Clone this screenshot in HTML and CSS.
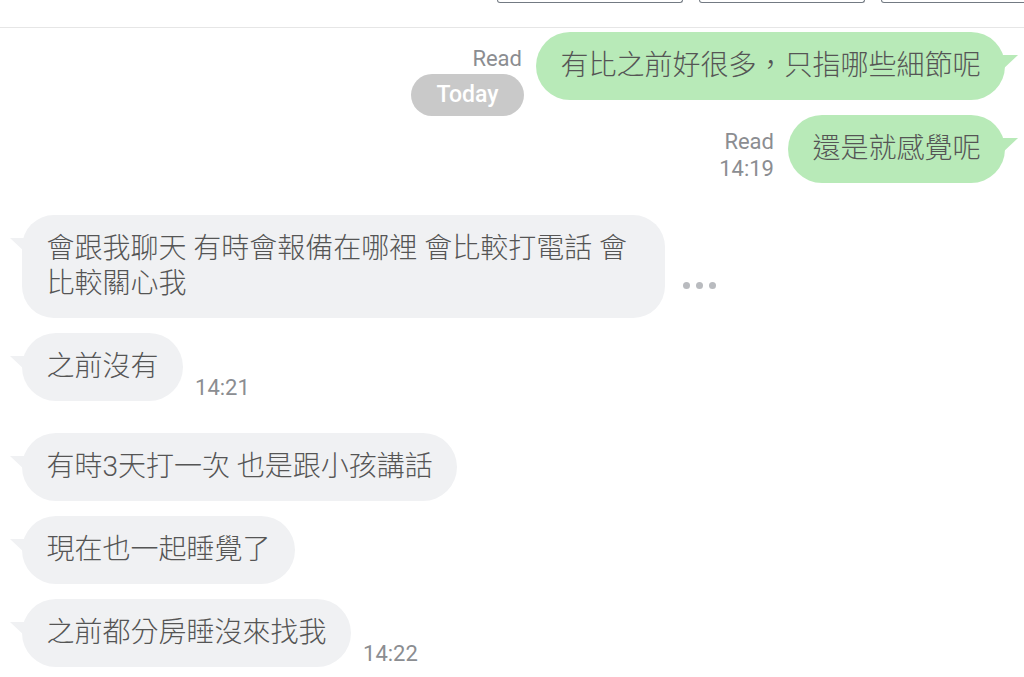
FILE: index.html
```html
<!DOCTYPE html>
<html lang="zh-Hant">
<head>
<meta charset="UTF-8">
<title>Chat</title>
<link rel="stylesheet" href="styles.css">
</head>
<body>
<div class="toolbar">
	<div class="tool tool-wide"></div>
	<div class="tool"></div>
	<div class="tool tool-cut"></div>
</div>
<div class="messages">
	<div class="row out">
		<div class="meta">
			<span class="line">Read</span>
			<span class="date-chip">Today</span>
		</div>
		<div class="bubble">有比之前好很多，只指哪些細節呢</div>
	</div>
	<div class="row out timed">
		<div class="meta">
			<span class="line">Read</span>
			<span class="line">14:19</span>
		</div>
		<div class="bubble">還是就感覺呢</div>
	</div>
	<div class="row in">
		<div class="bubble wide">會跟我聊天 有時會報備在哪裡 會比較打電話 會比較關心我</div>
		<div class="more"><i></i><i></i><i></i></div>
	</div>
	<div class="row in timed">
		<div class="bubble">之前沒有</div>
		<div class="meta">
			<span class="line">14:21</span>
		</div>
	</div>
	<div class="row in">
		<div class="bubble">有時3天打一次 也是跟小孩講話</div>
	</div>
	<div class="row in">
		<div class="bubble">現在也一起睡覺了</div>
	</div>
	<div class="row in">
		<div class="bubble">之前都分房睡沒來找我</div>
		<div class="meta">
			<span class="line">14:22</span>
		</div>
	</div>
</div>
</body>
</html>
```

FILE: styles.css
```css
html, body {
	margin: 0;
	padding: 0;
	background-color: #fff;
	overflow: hidden;
}

body {
	font-family: Roboto, "Noto Sans CJK TC", sans-serif;
	color: #555;
}

/* cut-off buttons of the header above the chat */
.toolbar {
	height: 27px;
	border-bottom: 1px solid #e6e6e6;
	display: flex;
	justify-content: flex-end;
	gap: 16px;
	margin-right: -40px;
}

.tool {
	width: 164px;
	height: 2px;
	border: 1px solid #737a83;
	border-top: none;
	border-radius: 0 0 4px 4px;
}

.tool-wide {
	width: 184px;
}

.tool-cut {
	width: 181px;
}

.messages {
	padding: 4px 19px 0 22px;
	display: flex;
	flex-direction: column;
}

.row {
	display: flex;
	gap: 14px;
	margin-bottom: 15px;
}

.row.timed {
	margin-bottom: 32px;
}

.row.out {
	justify-content: flex-end;
	align-items: flex-start;
}

.row.in {
	justify-content: flex-start;
	align-items: flex-end;
}

.bubble {
	position: relative;
	font-size: 28px;
	font-weight: 300;
	line-height: 35px;
	padding: 16px 24.5px 17px;
	border-radius: 34px;
	background-color: #f0f1f3;
	max-width: 594px;
}

.bubble.wide {
	border-radius: 32px;
}

.out .bubble {
	background-color: #b8eab8;
}

.bubble::before {
	content: "";
	position: absolute;
	top: 23px;
	width: 17px;
	height: 16px;
	background-color: inherit;
}

.in .bubble::before {
	left: -12px;
	clip-path: polygon(0 0, 100% 0, 100% 100%);
}

.out .bubble::before {
	right: -13px;
	clip-path: polygon(0 0, 100% 0, 0 100%);
}

.meta {
	display: flex;
	flex-direction: column;
	align-items: flex-end;
	font-size: 22px;
	line-height: 27px;
	color: #8b8d91;
}

.out .meta {
	padding-top: 13px;
}

.in .meta {
	margin-left: -2px;
}

.date-chip {
	margin-top: 2px;
	margin-bottom: -16px;
	margin-right: -2px;
	width: 113px;
	height: 42px;
	line-height: 42px;
	text-align: center;
	border-radius: 21px;
	background-color: #c9c9c9;
	color: #fff;
	font-size: 23px;
	font-weight: 500;
}

.more {
	display: flex;
	gap: 6px;
	margin-left: 4px;
	margin-bottom: 29px;
}

.more i {
	width: 7px;
	height: 7px;
	border-radius: 50%;
	background-color: #b9bbbf;
}
```
